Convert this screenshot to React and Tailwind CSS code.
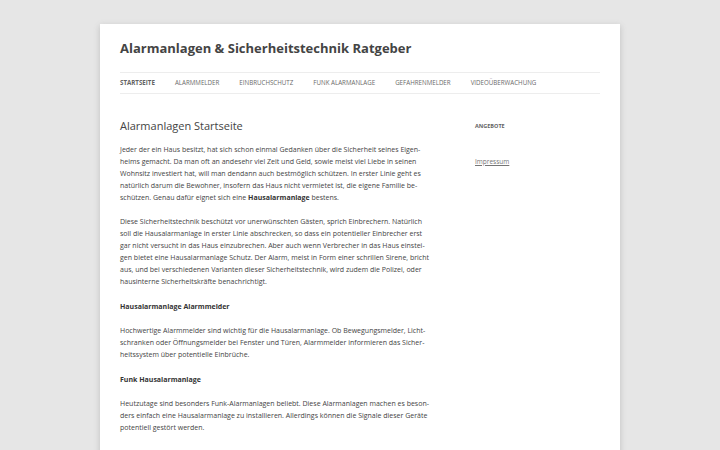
import React from 'react';

const nav = ['Startseite', 'Alarmmelder', 'Einbruchschutz', 'Funk Alarmanlage', 'Gefahrenmelder', 'Videoüberwachung'];

const blocks = [
  {
    type: 'p',
    lines: [
      'Jeder der ein Haus besitzt, hat sich schon einmal Gedanken über die Sicherheit seines Eigen-',
      'heims gemacht. Da man oft an andesehr viel Zeit und Geld, sowie meist viel Liebe in seinen',
      'Wohnsitz investiert hat, will man dendann auch bestmöglich schützen. In erster Linie geht es',
      'natürlich darum die Bewohner, insofern das Haus nicht vermietet ist, die eigene Familie be-',
      <>schützen. Genau dafür eignet sich eine <strong className="font-bold text-[#333]">Hausalarmanlage</strong> bestens.</>,
    ],
  },
  {
    type: 'p',
    lines: [
      'Diese Sicherheitstechnik beschützt vor unerwünschten Gästen, sprich Einbrechern. Natürlich',
      'soll die Hausalarmanlage in erster Linie abschrecken, so dass ein potentieller Einbrecher erst',
      'gar nicht versucht in das Haus einzubrechen. Aber auch wenn Verbrecher in das Haus einstei-',
      'gen bietet eine Hausalarmanlage Schutz. Der Alarm, meist in Form einer schrillen Sirene, bricht',
      'aus, und bei verschiedenen Varianten dieser Sicherheitstechnik, wird zudem die Polizei, oder',
      'hausinterne Sicherheitskräfte benachrichtigt.',
    ],
  },
  { type: 'h', text: 'Hausalarmanlage Alarmmelder' },
  {
    type: 'p',
    lines: [
      'Hochwertige Alarmmelder sind wichtig für die Hausalarmanlage. Ob Bewegungsmelder, Licht-',
      'schranken oder Öffnungsmelder bei Fenster und Türen, Alarmmelder informieren das Sicher-',
      'heitssystem über potentielle Einbrüche.',
    ],
  },
  { type: 'h', text: 'Funk Hausalarmanlage' },
  {
    type: 'p',
    lines: [
      'Heutzutage sind besonders Funk-Alarmanlagen beliebt. Diese Alarmanlagen machen es beson-',
      'ders einfach eine Hausalarmanlage zu installieren. Allerdings können die Signale dieser Geräte',
      'potentiell gestört werden.',
    ],
  },
  { type: 'h', text: 'Gefahrenmelder für die Hausalarmanlage' },
];

export default function App() {
  return (
    <div className="min-h-screen bg-[#e6e6e6] pt-6 font-['Open_Sans',sans-serif]">
      <div className="mx-auto w-[520px] min-h-[600px] bg-white px-5 shadow-[0_2px_6px_rgba(100,100,100,0.3)]">
        {/* Header */}
        <header className="pt-3">
          <h1 className="text-[13px] leading-[24px] font-bold text-[#444]">
            Alarmanlagen &amp; Sicherheitstechnik Ratgeber
          </h1>
          <nav className="mt-3 border-y border-[#ededed]">
            <ul className="flex gap-5">
              {nav.map((item, i) => (
                <li
                  key={item}
                  className={`text-[6.2px] leading-[20px] uppercase ${i === 0 ? 'font-bold text-[#636363]' : 'text-[#6a6a6a]'}`}
                >
                  {item}
                </li>
              ))}
            </ul>
          </nav>
        </header>

        {/* Main */}
        <div className="flex justify-between pt-[23px]">
          <main className="w-[312px] text-[7px] leading-[12px] text-[#444]">
            <h2 className="text-[11px] leading-[18px] font-normal text-[#444] mb-[9px]">Alarmanlagen Startseite</h2>
            {blocks.map((b, i) =>
              b.type === 'h' ? (
                <p key={i} className="mb-3 pt-px font-bold text-[#333] whitespace-nowrap">{b.text}</p>
              ) : (
                <p key={i} className="mb-3 whitespace-nowrap">
                  {b.lines.map((l, j) => (
                    <span key={j} className="block">{l}</span>
                  ))}
                </p>
              )
            )}
          </main>

          <aside className="w-[125px] pt-[3px]">
            <h3 className="text-[5.5px] leading-[12px] font-bold uppercase text-[#636363]">Angebote</h3>
            <a href="#" className="block mt-6 text-[6.5px] leading-[12px] text-[#757575] underline">Impressum</a>
          </aside>
        </div>
      </div>
    </div>
  );
}
